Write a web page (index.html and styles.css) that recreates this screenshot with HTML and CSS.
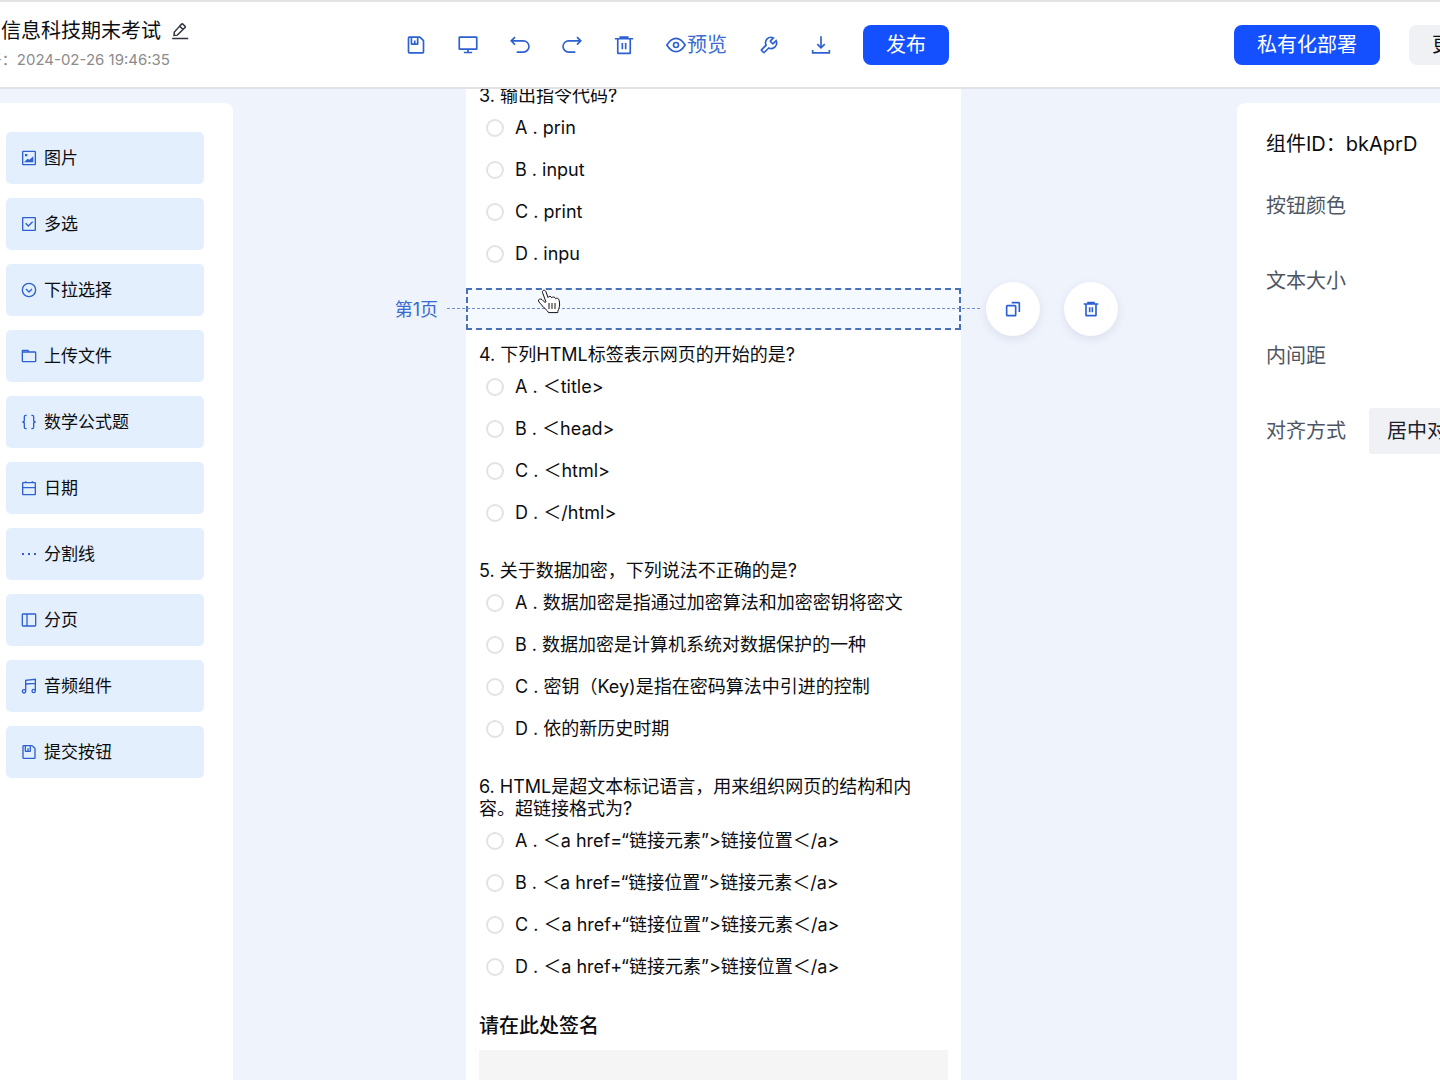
FILE: index.html
```html
<!DOCTYPE html>
<html lang="zh-CN">
<head>
<meta charset="utf-8">
<meta name="viewport" content="width=device-width, initial-scale=1">
<title>信息科技期末考试</title>
<link rel="stylesheet" href="styles.css">
</head>
<body>
<svg class="sprite" aria-hidden="true">
  <symbol id="i-save" viewBox="0 0 48 48"><path d="M21 13v9m19 21H8a2 2 0 0 1-2-2V7a2 2 0 0 1 2-2h24.500a2 2 0 0 1 1.500.6l7.400 7.400A2 2 0 0 1 42 14.500V41a2 2 0 0 1-2 2ZM13 5h15v16a1 1 0 0 1-1 1H14a1 1 0 0 1-1-1V5Z"/></symbol>
  <symbol id="i-desktop" viewBox="0 0 48 48"><path d="M24 34v8m0 0h-10m10 0h10M4 34h40a1 1 0 0 0 1-1V6a1 1 0 0 0-1-1H4a1 1 0 0 0-1 1v27a1 1 0 0 0 1 1Z"/></symbol>
  <symbol id="i-undo" viewBox="0 0 48 48"><path d="M12 5 3 14l9 9M4 14h28a13.500 13.500 0 0 1 0 27H16"/></symbol>
  <symbol id="i-redo" viewBox="0 0 48 48"><path d="m36 5 9 9-9 9M44 14H16a13.500 13.500 0 0 0 0 27h16"/></symbol>
  <symbol id="i-delete" viewBox="0 0 48 48"><path d="M2 9h7m0 0v34a1 1 0 0 0 1 1h28a1 1 0 0 0 1-1V9m-30 0h6m24 0h7m-7 0h-6m-18 0V5h18v4m-18 0h18M20 19v15m8-15v15"/></symbol>
  <symbol id="i-eye" viewBox="0 0 48 48"><path d="M24 40c8 0 15-5 22-16-7-11-14-16-22-16S9 13 2 24c7 11 14 16 22 16Z"/><circle cx="24" cy="24" r="6"/></symbol>
  <symbol id="i-tool" viewBox="0 0 48 48"><path d="M19.500 9.500c4-4 10-5 15-2.500l-7 7.200a1 1 0 0 0 0 1.400l5 5a1 1 0 0 0 1.400 0l7.100-7.100c2.300 5 1.500 11-2.500 15-4 4-10 5-15 2.500L12.500 42a1 1 0 0 1-1.400 0L6 36.900a1 1 0 0 1 0-1.400l11-11c-2.300-5-1.500-11 2.500-15Z"/></symbol>
  <symbol id="i-download" viewBox="0 0 48 48"><path d="m33 22-9 9-9-9M24 3v27m20 6v7H4v-7"/></symbol>
  <symbol id="i-edit" viewBox="0 0 48 48"><path d="m32 20 6-6a2 2 0 0 0 0-2l-7-7a2 2 0 0 0-2 0l-6 6m9 9L17 35l-9 1 1-9 14-16m9 9-9-9M3 44h43"/></symbol>
  <symbol id="i-image" viewBox="0 0 48 48"><path d="M41 44H7a2 2 0 0 1-2-2V6a2 2 0 0 1 2-2h34a2 2 0 0 1 2 2v36a2 2 0 0 1-2 2ZM14 14h3v3h-3Z"/><path class="solid" d="M35 35V23L25 32l-5-3-6 6Z"/></symbol>
  <symbol id="i-check" viewBox="0 0 48 48"><path d="M35 17 22 30l-8-8M6 43h36a1 1 0 0 0 1-1V6a1 1 0 0 0-1-1H6a1 1 0 0 0-1 1v36a1 1 0 0 0 1 1Z"/></symbol>
  <symbol id="i-down" viewBox="0 0 48 48"><circle cx="24" cy="24" r="20"/><path d="m15 21 9 9 9-9"/></symbol>
  <symbol id="i-folder" viewBox="0 0 48 48"><path d="M4 12h20l-3-5H5a1 1 0 0 0-1 1v4Zm0 0h38a2 2 0 0 1 2 2v25a2 2 0 0 1-2 2H6a2 2 0 0 1-2-2V12Z"/></symbol>
  <symbol id="i-braces" viewBox="0 0 48 48"><path d="M17 4h-3a4 4 0 0 0-4 4v11c0 3-3 5-6 5 3 0 6 2 6 5v11a4 4 0 0 0 4 4h3M31 4h3a4 4 0 0 1 4 4v11c0 3 3 5 6 5-3 0-6 2-6 5v11a4 4 0 0 1-4 4h-3"/></symbol>
  <symbol id="i-calendar" viewBox="0 0 48 48"><path d="M5 23h38M14 4v6m20-6v6M6 44h36a1 1 0 0 0 1-1V9a1 1 0 0 0-1-1H6a1 1 0 0 0-1 1v34a1 1 0 0 0 1 1Z"/></symbol>
  <symbol id="i-dots" viewBox="0 0 48 48"><path class="solid" d="M5 23h2v2H5zM23 23h2v2h-2zM41 23h2v2h-2z"/></symbol>
  <symbol id="i-layout" viewBox="0 0 48 48"><path d="M18 42V6m26 2a2 2 0 0 0-2-2H6a2 2 0 0 0-2 2v32a2 2 0 0 0 2 2h36a2 2 0 0 0 2-2V8Z"/></symbol>
  <symbol id="i-music" viewBox="0 0 48 48"><path d="M14 40a5 5 0 1 0-10 0 5 5 0 0 0 10 0Zm0 0V18M43 39a5 5 0 1 0-10 0 5 5 0 0 0 10 0Zm0 0V16M14 18V7l29-3v12m-29 2 29-2"/></symbol>
  <symbol id="i-copy" viewBox="0 0 48 48"><path d="M20 5h21a2 2 0 0 1 2 2v26M5 16v26a2 2 0 0 0 2 2h23a2 2 0 0 0 2-2V16a2 2 0 0 0-2-2H7a2 2 0 0 0-2 2Z"/></symbol>
</svg>

<div class="app">
  <header class="topbar">
    <div class="doc">
      <div class="doc-name">
        <h1>信息科技期末考试</h1>
        <button type="button" class="bare" aria-label="编辑名称"><svg class="icon icon-edit"><use href="#i-edit"/></svg></button>
      </div>
      <p class="doc-time">创建于：2024-02-26 19:46:35</p>
    </div>
    <nav class="tools">
      <button type="button" class="bare" aria-label="保存"><svg class="icon"><use href="#i-save"/></svg></button>
      <button type="button" class="bare" aria-label="电脑端"><svg class="icon"><use href="#i-desktop"/></svg></button>
      <button type="button" class="bare" aria-label="撤销"><svg class="icon"><use href="#i-undo"/></svg></button>
      <button type="button" class="bare" aria-label="重做"><svg class="icon"><use href="#i-redo"/></svg></button>
      <button type="button" class="bare" aria-label="清空"><svg class="icon"><use href="#i-delete"/></svg></button>
      <button type="button" class="bare"><svg class="icon"><use href="#i-eye"/></svg>预览</button>
      <button type="button" class="bare" aria-label="设置"><svg class="icon"><use href="#i-tool"/></svg></button>
      <button type="button" class="bare" aria-label="下载"><svg class="icon"><use href="#i-download"/></svg></button>
      <button type="button" class="btn primary">发布</button>
    </nav>
    <div class="account">
      <button type="button" class="btn primary">私有化部署</button>
      <button type="button" class="btn muted">更多</button>
    </div>
  </header>

  <main class="body">
    <aside class="library">
      <button type="button" class="part"><svg class="icon"><use href="#i-image"/></svg>图片</button>
      <button type="button" class="part"><svg class="icon"><use href="#i-check"/></svg>多选</button>
      <button type="button" class="part"><svg class="icon"><use href="#i-down"/></svg>下拉选择</button>
      <button type="button" class="part"><svg class="icon"><use href="#i-folder"/></svg>上传文件</button>
      <button type="button" class="part"><svg class="icon"><use href="#i-braces"/></svg>数学公式题</button>
      <button type="button" class="part"><svg class="icon"><use href="#i-calendar"/></svg>日期</button>
      <button type="button" class="part"><svg class="icon"><use href="#i-dots"/></svg>分割线</button>
      <button type="button" class="part"><svg class="icon"><use href="#i-layout"/></svg>分页</button>
      <button type="button" class="part"><svg class="icon"><use href="#i-music"/></svg>音频组件</button>
      <button type="button" class="part"><svg class="icon"><use href="#i-save"/></svg>提交按钮</button>
    </aside>

    <section class="stage">
      <form class="paper">
        <fieldset class="question">
          <legend>3. 输出指令代码?</legend>
          <label class="option"><input type="radio" name="q3">A . prin</label>
          <label class="option"><input type="radio" name="q3">B . input</label>
          <label class="option"><input type="radio" name="q3">C . print</label>
          <label class="option"><input type="radio" name="q3">D . inpu</label>
        </fieldset>

        <div class="page-break">
          <span class="page-label">第1页</span>
          <div class="page-actions">
            <button type="button" class="round" aria-label="复制"><svg class="icon"><use href="#i-copy"/></svg></button>
            <button type="button" class="round" aria-label="删除"><svg class="icon"><use href="#i-delete"/></svg></button>
          </div>
          <svg class="pointer" viewBox="0 0 24 26" aria-hidden="true">
            <path d="M9 13 5.500 3.500C5 1 8 .5 8.800 2.500L11 8.500c.5-1.500 3.200-1.500 3.800.3.800-1.300 3.200-1 3.700.8 1-1 3.500-.3 3.700 2 .6 3.500.6 5.500-.4 8-.5 1.500-1 2-1 4H11.500c-1-2.500-4-4-6-6.500C4 15 2 13.500 1.500 12c-.5-2 2-2.500 3.500-1.500L8.500 14"/>
            <path d="M12 14v6m3-6v6m3-6v6"/>
          </svg>
        </div>

        <fieldset class="question">
          <legend>4. 下列HTML标签表示网页的开始的是?</legend>
          <label class="option"><input type="radio" name="q4">A . ＜title&gt;</label>
          <label class="option"><input type="radio" name="q4">B . ＜head&gt;</label>
          <label class="option"><input type="radio" name="q4">C . ＜html&gt;</label>
          <label class="option"><input type="radio" name="q4">D . ＜/html&gt;</label>
        </fieldset>

        <fieldset class="question">
          <legend>5. 关于数据加密，下列说法不正确的是?</legend>
          <label class="option"><input type="radio" name="q5">A . 数据加密是指通过加密算法和加密密钥将密文</label>
          <label class="option"><input type="radio" name="q5">B . 数据加密是计算机系统对数据保护的一种</label>
          <label class="option"><input type="radio" name="q5">C . 密钥（Key)是指在密码算法中引进的控制</label>
          <label class="option"><input type="radio" name="q5">D . 依的新历史时期</label>
        </fieldset>

        <fieldset class="question">
          <legend>6. HTML是超文本标记语言，用来组织网页的结构和内容。超链接格式为?</legend>
          <label class="option"><input type="radio" name="q6">A . ＜a href=“链接元素”&gt;链接位置＜/a&gt;</label>
          <label class="option"><input type="radio" name="q6">B . ＜a href=“链接位置”&gt;链接元素＜/a&gt;</label>
          <label class="option"><input type="radio" name="q6">C . ＜a href+“链接位置”&gt;链接元素＜/a&gt;</label>
          <label class="option"><input type="radio" name="q6">D . ＜a href+“链接元素”&gt;链接位置＜/a&gt;</label>
        </fieldset>

        <section class="signature">
          <h2>请在此处签名</h2>
          <div class="sign-pad"></div>
        </section>
      </form>
    </section>

    <aside class="inspector">
      <p class="part-id">组件ID：bkAprD</p>
      <div class="field">按钮颜色</div>
      <div class="field">文本大小</div>
      <div class="field">内间距</div>
      <div class="field">
        <label for="align">对齐方式</label>
        <select id="align"><option>居中对齐</option><option>左对齐</option></select>
      </div>
    </aside>
  </main>
</div>
</body>
</html>
```
FILE: styles.css
```css
* {
  box-sizing: border-box;
}

body {
  margin: 0;
  font-family: Inter, "Noto Sans CJK SC", sans-serif;
  font-size: 18px;
  line-height: 22px;
  color: #0c0d10;
}

h1, h2, p, fieldset, legend {
  margin: 0;
  padding: 0;
}

button, select {
  border: 0;
  padding: 0;
  background: none;
  font: inherit;
  color: inherit;
  white-space: nowrap;
}

.sprite {
  position: absolute;
  width: 0;
  height: 0;
}

.icon {
  flex: none;
  width: 20px;
  height: 20px;
  fill: none;
  stroke: #2d60d0;
  stroke-width: 4;
}

.solid {
  fill: #2d60d0;
}

.app {
  display: flex;
  flex-direction: column;
  height: 100vh;
  overflow: hidden;
  background: #eff3fc;
}

/* Top bar */

.topbar {
  flex: none;
  display: grid;
  grid-template-columns: 405px 1fr 206px;
  align-items: center;
  height: 89px;
  border-top: 2px solid #e3e3e3;
  border-bottom: 2px solid #e0e2e6;
  background: #fff;
}

.doc {
  display: flex;
  flex-direction: column;
  gap: 3px;
}

.doc-name {
  display: flex;
  align-items: center;
  gap: 10px;
  padding-left: 1px;
}

.doc-name h1 {
  font-size: 20px;
  font-weight: 400;
  line-height: 28px;
}

.icon-edit {
  width: 18px;
  height: 18px;
  stroke: #33363d;
}

.doc-time {
  display: flex;
  justify-content: flex-end;
  width: 170px;
  font-size: 15px;
  line-height: 24px;
  color: #8c8c8c;
  white-space: nowrap;
}

.bare {
  display: flex;
  align-items: center;
  gap: 1px;
  font-size: 20px;
  line-height: 28px;
  color: #3a6bd0;
}

.tools, .account {
  display: flex;
  align-items: center;
}

.tools {
  gap: 32px;
  padding-left: 1px;
}

.account {
  gap: 29px;
}

.btn {
  flex: none;
  height: 40px;
  padding: 0 23px;
  border-radius: 8px;
  font-size: 20px;
}

.primary {
  background: #1450ff;
  color: #fff;
}

.muted {
  background: #f0f1f4;
}

/* Editor */

.body {
  flex: 1;
  min-height: 0;
  display: grid;
  grid-template-columns: 233px 1fr 203px;
}

.library, .inspector {
  margin-top: 14px;
  background: #fff;
}

.library {
  display: flex;
  flex-direction: column;
  gap: 14px;
  padding: 29px 29px 29px 6px;
  border-top-right-radius: 8px;
}

.part {
  display: flex;
  align-items: center;
  gap: 7px;
  height: 52px;
  padding-left: 15px;
  border-radius: 5px;
  background: #e3effd;
  font-size: 17px;
}

.part .icon {
  width: 16px;
  height: 16px;
}

.stage {
  min-height: 0;
  padding-left: 233px;
  overflow: hidden;
}

.paper {
  display: flex;
  flex-direction: column;
  width: 495px;
  margin-top: -4px;
  background: #fff;
}

.question {
  border: 0;
  margin: 0 13px 26px;
}

.question:first-child {
  margin-bottom: 13px;
}

.question legend {
  padding-right: 24px;
}

.option {
  display: flex;
  align-items: center;
  gap: 11px;
  height: 42px;
  padding-left: 7px;
}

.option input {
  appearance: none;
  flex: none;
  width: 18px;
  height: 18px;
  margin: 0;
  border: 2px solid #e3e3e4;
  border-radius: 50%;
  background: #fff;
}

.page-break {
  position: relative;
  height: 42px;
  margin-bottom: 14px;
  border: 2px dashed #4a70b8;
  background: #f4f8ff;
}

.page-break::before {
  content: "";
  position: absolute;
  left: -21px;
  right: -21px;
  top: 18px;
  border-top: 1px dashed #6f8fca;
}

.page-label {
  position: absolute;
  right: 521px;
  top: 9px;
  white-space: nowrap;
  color: #3a6bd0;
}

.page-actions {
  position: absolute;
  left: 518px;
  top: -8px;
  display: flex;
  gap: 24px;
}

.round {
  display: flex;
  align-items: center;
  justify-content: center;
  width: 54px;
  height: 54px;
  border-radius: 50%;
  background: #fff;
  box-shadow: 0 3px 10px rgba(40, 60, 110, 0.1);
}

.round .icon {
  width: 16px;
  height: 16px;
  stroke-width: 5;
}

.pointer {
  position: absolute;
  left: 69px;
  top: -1px;
  width: 24px;
  height: 26px;
  fill: #fff;
  stroke: #111;
  stroke-width: 1;
  stroke-linejoin: round;
}

.signature {
  margin: 0 13px;
}

.signature h2 {
  font-size: 20px;
  font-weight: 500;
  line-height: 24px;
}

.sign-pad {
  height: 200px;
  margin-top: 12px;
  background: #f5f5f5;
}

/* Properties */

.inspector {
  padding: 17px 0 0 29px;
  border-top-left-radius: 8px;
  font-size: 20px;
  white-space: nowrap;
}

.part-id {
  line-height: 48px;
}

.field {
  display: flex;
  align-items: center;
  gap: 23px;
  height: 75px;
  color: #4e5563;
}

.field select {
  appearance: none;
  flex: none;
  width: 160px;
  height: 46px;
  padding-left: 18px;
  border-radius: 3px;
  background: #f0f1f4;
  color: #1d2129;
}
```
